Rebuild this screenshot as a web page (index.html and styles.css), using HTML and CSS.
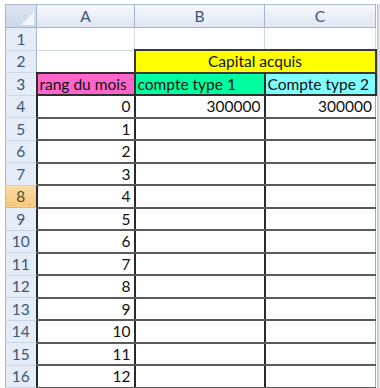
FILE: index.html
```html
<!DOCTYPE html>
<html lang="fr">
<head>
    <meta charset="UTF-8">
    <title>Capital acquis</title>
    <link rel="stylesheet" href="styles.css">
</head>
<body>
    <div class="window">
        <table class="sheet">
            <colgroup>
                <col class="col-head">
                <col class="col-a">
                <col class="col-b">
                <col class="col-c">
            </colgroup>
            <thead>
                <tr>
                    <th class="corner"><span class="tri"></span></th>
                    <th class="colh">A</th>
                    <th class="colh">B</th>
                    <th class="colh">C</th>
                </tr>
            </thead>
            <tbody>
                <tr>
                    <th class="rowh">1</th>
                    <td class="grid"></td>
                    <td class="grid"></td>
                    <td class="grid"></td>
                </tr>
                <tr>
                    <th class="rowh">2</th>
                    <td class="grid"></td>
                    <td class="title" colspan="2">Capital acquis</td>
                </tr>
                <tr>
                    <th class="rowh">3</th>
                    <td class="lbl pink">rang du mois</td>
                    <td class="lbl green">compte type 1</td>
                    <td class="lbl cyan">Compte type 2</td>
                </tr>
                <tr>
                    <th class="rowh">4</th>
                    <td class="num">0</td>
                    <td class="num">300000</td>
                    <td class="num">300000</td>
                </tr>
                <tr><th class="rowh">5</th><td class="num">1</td><td class="num"></td><td class="num"></td></tr>
                <tr><th class="rowh">6</th><td class="num">2</td><td class="num"></td><td class="num"></td></tr>
                <tr><th class="rowh">7</th><td class="num">3</td><td class="num"></td><td class="num"></td></tr>
                <tr><th class="rowh active">8</th><td class="num">4</td><td class="num"></td><td class="num"></td></tr>
                <tr><th class="rowh">9</th><td class="num">5</td><td class="num"></td><td class="num"></td></tr>
                <tr><th class="rowh">10</th><td class="num">6</td><td class="num"></td><td class="num"></td></tr>
                <tr><th class="rowh">11</th><td class="num">7</td><td class="num"></td><td class="num"></td></tr>
                <tr><th class="rowh">12</th><td class="num">8</td><td class="num"></td><td class="num"></td></tr>
                <tr><th class="rowh">13</th><td class="num">9</td><td class="num"></td><td class="num"></td></tr>
                <tr><th class="rowh">14</th><td class="num">10</td><td class="num"></td><td class="num"></td></tr>
                <tr><th class="rowh">15</th><td class="num">11</td><td class="num"></td><td class="num"></td></tr>
                <tr><th class="rowh">16</th><td class="num">12</td><td class="num"></td><td class="num"></td></tr>
            </tbody>
        </table>
        <div class="edge"></div>
    </div>
</body>
</html>
```

FILE: styles.css
```css
body {
    margin: 0;
    background: white;
    font-family: Lato, "Liberation Sans", sans-serif;
    font-size: 15.5px;
    color: #111;
    overflow: hidden;
}

.window {
    display: flex;
    align-items: flex-start;
    padding: 4px 0 0 5px;
}

.sheet {
    border-collapse: collapse;
    table-layout: fixed;
    width: 370px;
}

.col-head { width: 31px; }
.col-a { width: 98px; }
.col-b { width: 130px; }
.col-c { width: 111px; }

.edge {
    width: 5px;
    height: 400px;
    background: #dcdfe4;
    border-left: 1px solid #b9c3cf;
}

tr {
    height: 22.5px;
}

thead tr {
    height: 23px;
}

th, td {
    padding: 0 3px;
    line-height: 18px;
    white-space: nowrap;
    overflow: hidden;
}

thead th {
    font-weight: normal;
    color: #3e5675;
    background: linear-gradient(#f6f8fb, #dde6f2);
    border: 1px solid #9eb6ce;
    border-top-color: #aebfd3;
}

.corner {
    position: relative;
    background: linear-gradient(#dbe5f2, #c9d8ea);
}

.tri {
    position: absolute;
    right: 2px;
    bottom: 2px;
    width: 0;
    height: 0;
    border-left: 13px solid transparent;
    border-bottom: 13px solid #f3f6fa;
}

.rowh {
    font-weight: normal;
    color: #3e5675;
    text-align: center;
    background: #e4ecf7;
    border: 1px solid #9eb6ce;
    border-top-color: #c8d6e8;
    border-bottom-color: #c8d6e8;
}

.rowh.active {
    background: linear-gradient(#f9dca8, #f6c878);
    color: #5b4a2a;
    border-color: #f2b555;
}

.grid {
    border: 1px solid #d0d7e5;
}

.title {
    background: #ffff00;
    text-align: center;
    border: 2px solid #3a3a3a;
}

.lbl {
    border: 2px solid #2e2e2e;
    padding-left: 2px;
}

.pink { background: #ff66cc; }
.green { background: #00ffa0; }
.cyan { background: #80ffff; }

.num {
    text-align: right;
    padding-right: 3px;
    border-top: 2px solid #5a5a5a;
    border-bottom: 2px solid #5a5a5a;
    border-left: 2px solid #2a2a2a;
    border-right: 2px solid #2a2a2a;
}

tbody tr td:last-child.num {
    border-right: 1px solid #a8a8a8;
}
```
